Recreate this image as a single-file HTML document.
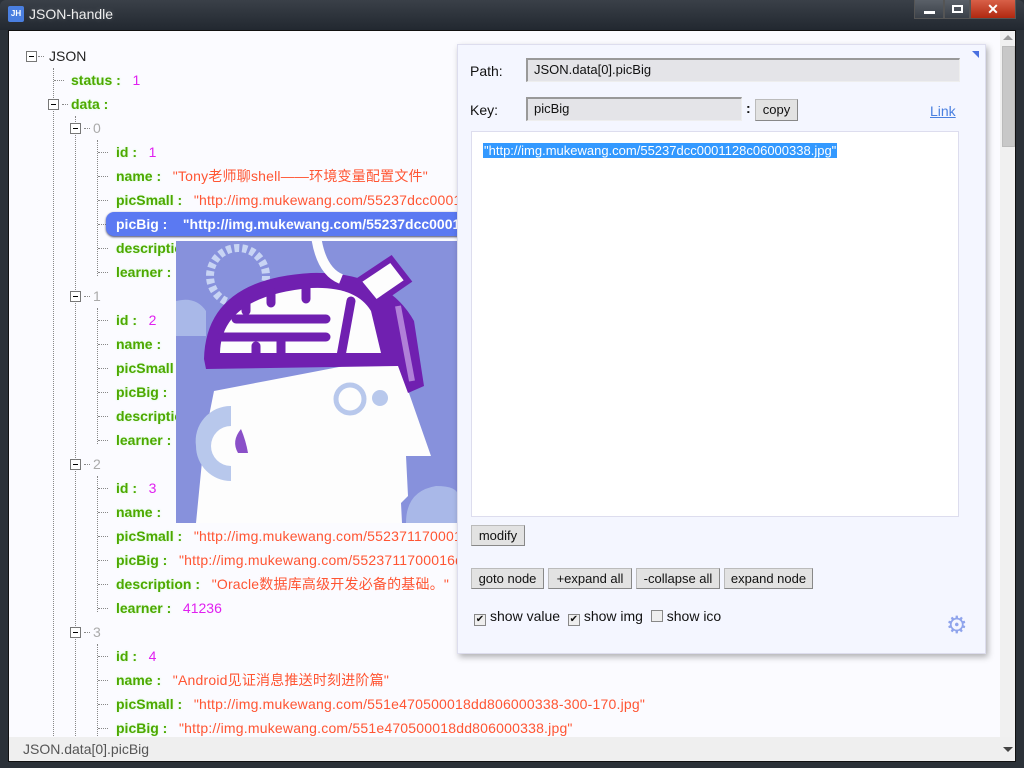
<!DOCTYPE html>
<html><head><meta charset="utf-8"><style>
*{margin:0;padding:0;box-sizing:border-box}
html{overflow:hidden}
body{width:1024px;height:768px;overflow:hidden;background:#2b3138;font-family:"Liberation Sans","Noto Sans CJK SC",sans-serif;font-size:14px;position:relative}
.title{position:absolute;left:0;top:0;width:1024px;height:30px;background:linear-gradient(#3a4048,#222830);border-radius:6px 6px 0 0}
.title .ic{position:absolute;left:8px;top:6px;width:16px;height:16px;background:#4a7fe0;border-radius:2px;color:#fff;font-size:8px;font-weight:bold;text-align:center;line-height:16px}
.title .t{position:absolute;left:29px;top:6px;color:#eee;font-size:14px;text-shadow:0 0 6px #fff3}
.wb{position:absolute;top:0;height:19px;border:1px solid #555;border-top:none}
.content{position:absolute;left:8px;top:30px;width:1008px;height:732px;background:#fbfbff;overflow:hidden;border:1px solid #111}
.row{position:absolute;height:20px;line-height:20px;white-space:nowrap}
.k{color:#4ea800;font-weight:bold;text-shadow:0 0 2px #cfc}
.n{color:#e020f0}
.s{color:#ff5533;letter-spacing:0.2px}
.g{color:#aaa}
.tg{position:absolute;width:11px;height:11px;border:1px solid #777;background:#fff}
.tg:after{content:"";position:absolute;left:2px;top:4px;width:5px;height:1px;background:#000}
.vl{position:absolute;width:0;border-left:1px dotted #888}
.hl{position:absolute;height:0;width:10px;border-top:1px dotted #888}
.panel{position:absolute;left:448px;top:13px;width:529px;height:610px;background:#f4f6ff;box-shadow:2px 3px 6px rgba(0,0,0,.3);border:1px solid #dde}
.inp{position:absolute;background:#e4e4e8;border:1px solid #999;border-right-color:#eee;border-bottom-color:#eee;border-width:2px 1px 1px 2px;font-size:13px;padding-left:6px;line-height:20px;color:#111}
.btn{position:absolute;height:21px;background:#e2e2e2;border:1px solid #bbb;border-right-color:#888;border-bottom-color:#888;font-size:13px;line-height:19px;text-align:center;color:#111}
.lab{position:absolute;font-size:14px;color:#111}
.cb{display:inline-block;width:12px;height:12px;border:1px solid #888;background:#eee;vertical-align:-1px;margin-right:4px;font-size:10px;line-height:10px;text-align:center}
</style></head><body>
<div class="title"><div class="ic">JH</div><div class="t">JSON-handle</div>
<div class="wb" style="left:914px;width:30px;background:linear-gradient(#5a6068,#3a4048)"><div style="position:absolute;left:9px;top:11px;width:11px;height:3px;background:#fff"></div></div>
<div class="wb" style="left:944px;width:26px;background:linear-gradient(#5a6068,#3a4048)"><div style="position:absolute;left:7px;top:5px;width:11px;height:8px;border:2px solid #fff"></div></div>
<div class="wb" style="left:970px;width:46px;background:linear-gradient(#d86048,#b02810);color:#fff;font-weight:bold;text-align:center;font-size:14px;line-height:18px">✕</div>
</div>
<div class="content">
<div class="vl" style="left:44px;top:37px;height:700px"></div>
<div class="vl" style="left:66px;top:85px;height:700px"></div>
<div class="vl" style="left:88px;top:109px;height:136px"></div>
<div class="vl" style="left:88px;top:277px;height:136px"></div>
<div class="vl" style="left:88px;top:445px;height:136px"></div>
<div class="vl" style="left:88px;top:613px;height:130px"></div>
<div class="hl" style="left:29px;top:25px;width:6px"></div>
<div class="hl" style="left:45px;top:49px"></div>
<div class="hl" style="left:53px;top:73px;width:6px"></div>
<div class="hl" style="left:75px;top:97px;width:6px"></div>
<div class="hl" style="left:75px;top:265px;width:6px"></div>
<div class="hl" style="left:75px;top:433px;width:6px"></div>
<div class="hl" style="left:75px;top:601px;width:6px"></div>
<div class="tg" style="left:17px;top:20px"></div>
<div class="tg" style="left:39px;top:68px"></div>
<div class="tg" style="left:61px;top:92px"></div>
<div class="tg" style="left:61px;top:260px"></div>
<div class="tg" style="left:61px;top:428px"></div>
<div class="tg" style="left:61px;top:596px"></div>
<div class="row" style="left:40px;top:15px;color:#222">JSON</div>
<div class="row" style="left:62px;top:39px"><span class="k">status :</span> &nbsp; <span class="n">1</span></div>
<div class="row" style="left:62px;top:63px"><span class="k">data :</span></div>
<div class="row g" style="left:84px;top:87px">0</div>
<div class="row g" style="left:84px;top:255px">1</div>
<div class="row g" style="left:84px;top:423px">2</div>
<div class="row g" style="left:84px;top:591px">3</div>
<div class="hl" style="left:89px;top:121px"></div><div class="row" style="left:107px;top:111px"><span class="k">id :</span> &nbsp;&nbsp;<span class="n">1</span></div>
<div class="hl" style="left:89px;top:145px"></div><div class="row" style="left:107px;top:135px"><span class="k">name :</span> &nbsp;&nbsp;<span class="s">"Tony老师聊shell——环境变量配置文件"</span></div>
<div class="hl" style="left:89px;top:169px"></div><div class="row" style="left:107px;top:159px"><span class="k">picSmall :</span> &nbsp;&nbsp;<span class="s">"http://img.mukewang.com/55237dcc0001128c06000338-300-170.jpg"</span></div>
<div class="hl" style="left:89px;top:193px"></div>
<div style="position:absolute;left:97px;top:181px;width:400px;height:24px;background:#5b79f2;border-radius:8px 0 0 8px;box-shadow:0 1px 2px #446"></div>
<div class="row" style="left:107px;top:183px;color:#fff;font-weight:bold">picBig : &nbsp; &nbsp;"http://img.mukewang.com/55237dcc0001128c06000338.jpg"</div>
<div class="hl" style="left:89px;top:217px"></div><div class="row" style="left:107px;top:207px"><span class="k">description :</span></div>
<div class="hl" style="left:89px;top:241px"></div><div class="row" style="left:107px;top:231px"><span class="k">learner :</span></div>
<div class="hl" style="left:89px;top:289px"></div><div class="row" style="left:107px;top:279px"><span class="k">id :</span> &nbsp;&nbsp;<span class="n">2</span></div>
<div class="hl" style="left:89px;top:313px"></div><div class="row" style="left:107px;top:303px"><span class="k">name :</span></div>
<div class="hl" style="left:89px;top:337px"></div><div class="row" style="left:107px;top:327px"><span class="k">picSmall :</span></div>
<div class="hl" style="left:89px;top:361px"></div><div class="row" style="left:107px;top:351px"><span class="k">picBig :</span></div>
<div class="hl" style="left:89px;top:385px"></div><div class="row" style="left:107px;top:375px"><span class="k">description :</span></div>
<div class="hl" style="left:89px;top:409px"></div><div class="row" style="left:107px;top:399px"><span class="k">learner :</span></div>
<div class="hl" style="left:89px;top:457px"></div><div class="row" style="left:107px;top:447px"><span class="k">id :</span> &nbsp;&nbsp;<span class="n">3</span></div>
<div class="hl" style="left:89px;top:481px"></div><div class="row" style="left:107px;top:471px"><span class="k">name :</span></div>
<div class="hl" style="left:89px;top:505px"></div><div class="row" style="left:107px;top:495px"><span class="k">picSmall :</span> &nbsp;&nbsp;<span class="s">"http://img.mukewang.com/5523711700016d1606000338-300-170.jpg"</span></div>
<div class="hl" style="left:89px;top:529px"></div><div class="row" style="left:107px;top:519px"><span class="k">picBig :</span> &nbsp;&nbsp;<span class="s">"http://img.mukewang.com/5523711700016d1606000338.jpg"</span></div>
<div class="hl" style="left:89px;top:553px"></div><div class="row" style="left:107px;top:543px"><span class="k">description :</span> &nbsp;&nbsp;<span class="s">"Oracle数据库高级开发必备的基础。"</span></div>
<div class="hl" style="left:89px;top:577px"></div><div class="row" style="left:107px;top:567px"><span class="k">learner :</span> &nbsp;&nbsp;<span class="n">41236</span></div>
<div class="hl" style="left:89px;top:625px"></div><div class="row" style="left:107px;top:615px"><span class="k">id :</span> &nbsp;&nbsp;<span class="n">4</span></div>
<div class="hl" style="left:89px;top:649px"></div><div class="row" style="left:107px;top:639px"><span class="k">name :</span> &nbsp;&nbsp;<span class="s">"Android见证消息推送时刻进阶篇"</span></div>
<div class="hl" style="left:89px;top:673px"></div><div class="row" style="left:107px;top:663px"><span class="k">picSmall :</span> &nbsp;&nbsp;<span class="s">"http://img.mukewang.com/551e470500018dd806000338-300-170.jpg"</span></div>
<div class="hl" style="left:89px;top:697px"></div><div class="row" style="left:107px;top:687px"><span class="k">picBig :</span> &nbsp;&nbsp;<span class="s">"http://img.mukewang.com/551e470500018dd806000338.jpg"</span></div>

<svg style="position:absolute;left:167px;top:210px" width="282" height="282" viewBox="0 0 282 282">
<rect width="282" height="282" fill="#8791dc"/>
<circle cx="62" cy="35" r="28" fill="none" stroke="#c8d4f4" stroke-width="8" stroke-dasharray="5 3"/>
<path d="M0 60 Q20 55 30 70 L30 95 L0 95Z" fill="#a9b8e8"/>
<path d="M230 282 Q230 250 260 245 Q282 245 282 255 L282 282Z" fill="#a9b8e8"/>
<path d="M20 282 L28 200 L38 150 L220 115 L255 215 L230 215 L232 255 L225 262 L226 282Z" fill="#fdfdfd"/>
<path d="M20 205 A35 35 0 0 1 55 165 L55 240 A35 35 0 0 1 20 205Z" fill="#b8c8ec"/>
<path d="M35 205 A20 20 0 0 1 55 185 L55 225 A20 20 0 0 1 35 205Z" fill="#fdfdfd"/>
<circle cx="174" cy="158" r="14" fill="none" stroke="#b8c8ec" stroke-width="5"/>
<circle cx="204" cy="157" r="8" fill="#b8c8ec"/>
<path d="M62 212 Q55 200 65 188 Q70 200 72 212Z" fill="#8a50c8"/>
<path d="M28 118 Q30 38 135 32 Q210 30 238 80 L248 145 L232 152 L222 125 L30 128Z" fill="#7020b0"/>
<path d="M44 112 Q45 55 135 47 Q180 45 195 70 L205 112 Z" fill="#fdfdfd"/>
<path d="M45 96 L150 96 M60 78 L150 78 M70 58 L70 70 M95 50 L95 62 M130 45 L130 58 M105 96 L105 112 M80 114 L80 105 M175 60 L165 115" stroke="#7020b0" stroke-width="9" stroke-linecap="round" fill="none"/>
<path d="M140 -5 Q145 30 165 38" stroke="#fdfdfd" stroke-width="10" fill="none"/>
<path d="M182 40 L215 18 L232 40 L200 62Z" fill="#fdfdfd" stroke="#7020b0" stroke-width="6"/>
<path d="M222 65 L236 140" stroke="#b080d8" stroke-width="6"/>
</svg>

<div class="panel">
<div style="position:absolute;right:6px;top:6px;width:0;height:0;border-left:7px solid transparent;border-top:7px solid #4a70e0"></div>
<div class="lab" style="left:12px;top:18px">Path:</div>
<div class="inp" style="left:68px;top:13px;width:434px;height:24px">JSON.data[0].picBig</div>
<div class="lab" style="left:12px;top:57px">Key:</div>
<div class="inp" style="left:68px;top:52px;width:216px;height:24px">picBig</div>
<div class="lab" style="left:288px;top:55px;font-weight:bold">:</div>
<div class="btn" style="left:297px;top:54px;width:43px;height:22px">copy</div>
<div class="lab" style="left:472px;top:58px;color:#4a80e0;text-decoration:underline">Link</div>
<div style="position:absolute;left:13px;top:86px;width:488px;height:386px;background:#fff;border:1px solid #dde">
<div style="position:absolute;left:11px;top:11px;background:#3399ff;color:#fff;font-size:13px;line-height:15px;padding:0 1px">"http://img.mukewang.com/55237dcc0001128c06000338.jpg"</div>
</div>
<div class="btn" style="left:13px;top:480px;width:54px">modify</div>
<div class="btn" style="left:13px;top:523px;width:73px">goto node</div>
<div class="btn" style="left:90px;top:523px;width:84px">+expand all</div>
<div class="btn" style="left:178px;top:523px;width:84px">-collapse all</div>
<div class="btn" style="left:266px;top:523px;width:89px">expand node</div>
<div class="lab" style="left:16px;top:563px"><span class="cb">✔</span>show value &nbsp;<span class="cb">✔</span>show img &nbsp;<span class="cb"></span>show ico</div>
<div style="position:absolute;left:488px;top:569px;color:#8fa4ec;font-size:24px;line-height:24px">⚙</div>
</div>

<div style="position:absolute;left:991px;top:0;width:17px;height:706px;background:#f0f0f0"></div>
<div style="position:absolute;left:994px;top:4px;width:0;height:0;border:5px solid transparent;border-bottom-color:#999;border-top:none"></div>
<div style="position:absolute;left:993px;top:15px;width:13px;height:101px;background:#c8c8c8;border:1px solid #bbb"></div>
<div style="position:absolute;left:0;top:706px;width:1008px;height:26px;background:#efefef"></div>
<div style="position:absolute;left:994px;top:716px;width:0;height:0;border:5px solid transparent;border-top-color:#444;border-bottom:none"></div>
<div style="position:absolute;left:14px;top:710px;color:#555;font-size:14px">JSON.data[0].picBig</div>
</div>
</body></html>
